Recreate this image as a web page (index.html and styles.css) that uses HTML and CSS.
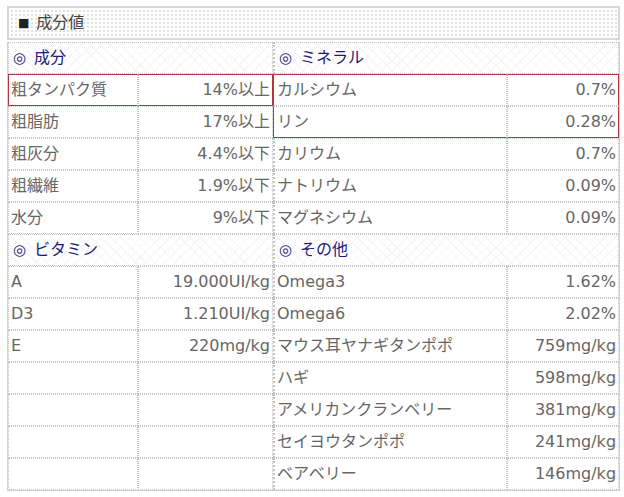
FILE: index.html
```html
<!DOCTYPE html>
<html lang="ja">
<head>
<meta charset="utf-8">
<link rel="stylesheet" href="styles.css">
</head>
<body>
<div class="wrap">
  <div class="title"><div class="title-inner"><span class="sq">■</span>成分値</div></div>
  <table class="tbl">
    <colgroup><col class="c1"><col class="c2"><col class="c3"><col class="c4"></colgroup>
    <tr class="sec"><td colspan="2"><span class="mark">◎</span>成分</td><td colspan="2" class="mid"><span class="mark">◎</span>ミネラル</td></tr>
    <tr>
      <td class="rl rt rb">粗タンパク質</td><td class="num rr rt rb">14%以上</td>
      <td class="mid rl rt">カルシウム</td><td class="num rr rt">0.7%</td>
    </tr>
    <tr>
      <td>粗脂肪</td><td class="num">17%以上</td>
      <td class="mid rl rb">リン</td><td class="num rr rb">0.28%</td>
    </tr>
    <tr><td>粗灰分</td><td class="num">4.4%以下</td><td class="mid">カリウム</td><td class="num">0.7%</td></tr>
    <tr><td>粗繊維</td><td class="num">1.9%以下</td><td class="mid">ナトリウム</td><td class="num">0.09%</td></tr>
    <tr><td>水分</td><td class="num">9%以下</td><td class="mid">マグネシウム</td><td class="num">0.09%</td></tr>
    <tr class="sec"><td colspan="2"><span class="mark">◎</span>ビタミン</td><td colspan="2" class="mid"><span class="mark">◎</span>その他</td></tr>
    <tr><td>A</td><td class="num">19.000UI/kg</td><td class="mid">Omega3</td><td class="num">1.62%</td></tr>
    <tr><td>D3</td><td class="num">1.210UI/kg</td><td class="mid">Omega6</td><td class="num">2.02%</td></tr>
    <tr><td>E</td><td class="num">220mg/kg</td><td class="mid">マウス耳ヤナギタンポポ</td><td class="num">759mg/kg</td></tr>
    <tr><td></td><td></td><td class="mid">ハギ</td><td class="num">598mg/kg</td></tr>
    <tr><td></td><td></td><td class="mid">アメリカンクランベリー</td><td class="num">381mg/kg</td></tr>
    <tr><td></td><td></td><td class="mid">セイヨウタンポポ</td><td class="num">241mg/kg</td></tr>
    <tr><td></td><td></td><td class="mid">ベアベリー</td><td class="num">146mg/kg</td></tr>
  </table>
</div>
</body>
</html>
```
FILE: styles.css
```css
html, body {
  margin: 0;
  padding: 0;
  background: #fff;
}
body {
  font-family: "DejaVu Sans", "Noto Sans CJK JP", sans-serif;
  font-size: 16px;
  color: #666;
}
.wrap {
  width: 613px;
  padding: 6px 0 0 7px;
}
.title {
  border: 2px solid #d8d8d8;
  padding: 1px;
  background: #fff;
}
.title-inner {
  height: 28px;
  line-height: 28px;
  padding-left: 8px;
  color: #444;
  background-color: #fff;
  background-image: radial-gradient(circle, #e0e0e0 0.8px, transparent 1.2px);
  background-size: 4px 4px;
}
.sq {
  font-size: 12px;
  color: #222;
  margin-right: 7px;
  vertical-align: 1px;
}
.tbl {
  margin-top: 2px;
  width: 613px;
  table-layout: fixed;
  border-collapse: separate;
  border-spacing: 0;
  border: 1px solid #d0d0d0;
  border-top: none;
}
.c1 { width: 130px; }
.c2 { width: 135px; }
.c3 { width: 234px; }
.c4 { width: 112px; }
.tbl td {
  border: 1px dotted #c4c4c4;
  height: 30px;
  padding: 0 2px;
  line-height: 30px;
  white-space: nowrap;
  overflow: hidden;
  vertical-align: middle;
}
.tbl td.mid { border-left-width: 2px; }
.num { text-align: right; }
.sec td {
  color: #1c1c78;
  padding-left: 4px;
  background-color: #fff;
  background-image:
    repeating-linear-gradient(45deg, #f6f6f6 0 1px, transparent 1px 7px),
    repeating-linear-gradient(-45deg, #f6f6f6 0 1px, transparent 1px 7px);
}
.mark {
  font-size: 15px;
  margin-right: 8px;
}
.tbl td.rl { border-left: 1px solid #b53440; }
.tbl td.rr { border-right: 1px solid #b53440; }
.tbl td.rt { border-top: 1px solid #b53440; }
.tbl td.rb { border-bottom: 1px solid #b53440; }
.tbl td.mid.rl { border-left: 1px solid #b53440; padding-left: 3px; }
```
